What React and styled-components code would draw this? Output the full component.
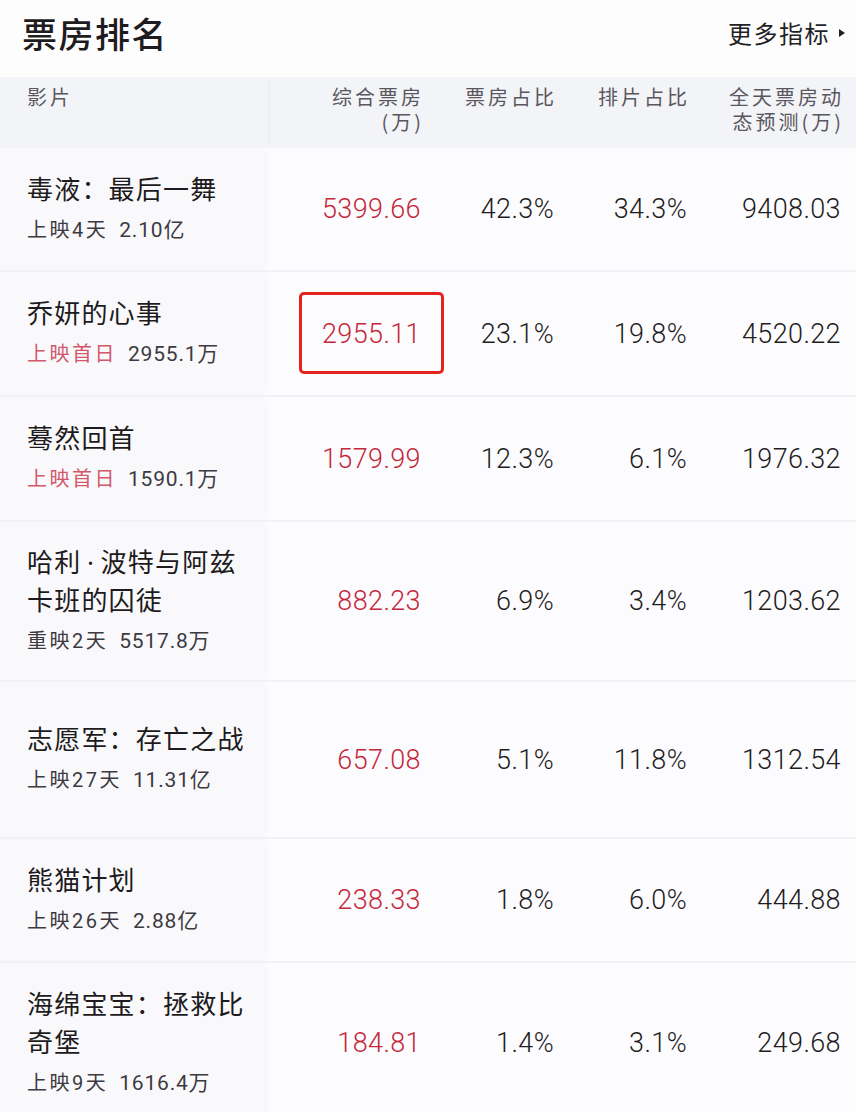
import React from "react";
import styled, { createGlobalStyle } from "styled-components";

const Global = createGlobalStyle`
  html, body { margin: 0; padding: 0; background: #fbfbfd; }
  body { font-family: "Noto Sans CJK SC", "Noto Sans", sans-serif; }
`;

const COLS = "265px 156px 133px 133px 154px";

const Page = styled.div`
  width: 856px;
  background: #fbfbfd;
  color: #1f1d22;
`;

const TitleBar = styled.div`
  height: 77px;
  display: flex;
  align-items: center;
  justify-content: space-between;
  padding: 0 10px 0 22px;
  box-sizing: border-box;
  background: #fdfdfe;
`;

const Title = styled.h1`
  margin: -12px 0 0;
  font-size: 35px;
  font-weight: 500;
  line-height: 1;
  letter-spacing: 1.5px;
  color: #1e1c21;
`;

const More = styled.div`
  display: flex;
  align-items: center;
  gap: 8px;
  font-size: 24px;
  letter-spacing: 1.5px;
  color: #221f26;
  margin-top: -12px;
`;

const HeaderRow = styled.div`
  display: grid;
  grid-template-columns: ${COLS};
  height: 71px;
  background: #f3f4f7;
`;

const HeadCell = styled.div`
  padding-top: 7px;
  font-size: 20px;
  line-height: 25px;
  letter-spacing: 3px;
  color: #5a5760;
  text-align: ${(p) => (p.$left ? "left" : "right")};
  padding-left: ${(p) => (p.$left ? "27px" : "0")};
  margin-right: -3px;
  ${(p) => p.$left && "box-shadow: 4px 0 6px -4px rgba(0,0,0,0.05);"}
`;

const HeadLine = styled.span`
  display: block;
  height: 25px;
`;

const Row = styled.div`
  display: grid;
  grid-template-columns: ${COLS};
  height: ${(p) => p.$h}px;
  border-bottom: 2px solid #f1f2f5;
  box-sizing: border-box;
  background: #fcfcfe;
`;

const FilmCell = styled.div`
  display: flex;
  flex-direction: column;
  justify-content: center;
  padding-left: 27px;
  background: #f9f9fb;
  box-shadow: 4px 0 6px -4px rgba(0, 0, 0, 0.05);
`;

const FilmName = styled.div`
  font-family: "Noto Sans", "Noto Sans CJK SC", sans-serif;
  font-size: 26px;
  line-height: 38px;
  letter-spacing: 1.2px;
  color: #1d1b20;
  width: 236px;
`;

const NameLine = styled.span`
  display: block;
`;

const Sub = styled.div`
  margin-top: 3px;
  font-size: 20px;
  line-height: 38px;
  color: #3d3a42;
  display: flex;
  align-items: baseline;
  gap: 11px;
`;

const SubLabel = styled.span`
  letter-spacing: 2.5px;
  color: ${(p) => (p.$hot ? "#d2586a" : "#3d3a42")};
  font-family: "Roboto", "Noto Sans CJK SC", sans-serif;
`;

const SubValue = styled.span`
  font-family: "Roboto", "Noto Sans CJK SC", sans-serif;
  font-size: 21px;
  letter-spacing: 0.8px;
`;

const NumCell = styled.div`
  display: flex;
  align-items: center;
  justify-content: flex-end;
  font-family: "Roboto", "Noto Sans", sans-serif;
  font-size: 27px;
  font-weight: 300;
  letter-spacing: 0.4px;
  color: ${(p) => (p.$red ? "#c5283b" : "#1f1d22")};
`;

const Boxed = styled.span`
  position: relative;
  &::after {
    content: "";
    position: absolute;
    left: -23px;
    right: -23px;
    top: -26px;
    bottom: -24px;
    border: 3.5px solid #e4231f;
    border-radius: 5px;
  }
`;

const rows = [
  { name: ["毒液：最后一舞"], label: "上映4天", value: "2.10亿", bo: "5399.66", share: "42.3%", sched: "34.3%", fc: "9408.03", h: 124 },
  { name: ["乔妍的心事"], label: "上映首日", hot: true, value: "2955.1万", bo: "2955.11", share: "23.1%", sched: "19.8%", fc: "4520.22", h: 125, boxed: true },
  { name: ["蓦然回首"], label: "上映首日", hot: true, value: "1590.1万", bo: "1579.99", share: "12.3%", sched: "6.1%", fc: "1976.32", h: 125 },
  { name: ["哈利\u2009·\u2009波特与阿兹", "卡班的囚徒"], label: "重映2天", value: "5517.8万", bo: "882.23", share: "6.9%", sched: "3.4%", fc: "1203.62", h: 160 },
  { name: ["志愿军：存亡之战"], label: "上映27天", value: "11.31亿", bo: "657.08", share: "5.1%", sched: "11.8%", fc: "1312.54", h: 157 },
  { name: ["熊猫计划"], label: "上映26天", value: "2.88亿", bo: "238.33", share: "1.8%", sched: "6.0%", fc: "444.88", h: 124 },
  { name: ["海绵宝宝：拯救比", "奇堡"], label: "上映9天", value: "1616.4万", bo: "184.81", share: "1.4%", sched: "3.1%", fc: "249.68", h: 162 },
];

const Caret = () => (
  <svg width="8" height="10" viewBox="0 0 8 10">
    <path d="M1 1 L7 5 L1 9 Z" fill="#221f26" />
  </svg>
);

export default function App() {
  return (
    <Page>
      <Global />
      <TitleBar>
        <Title>票房排名</Title>
        <More>
          更多指标
          <Caret />
        </More>
      </TitleBar>
      <HeaderRow>
        <HeadCell $left>影片</HeadCell>
        <HeadCell>
          <HeadLine>综合票房</HeadLine>
          <HeadLine>(万)</HeadLine>
        </HeadCell>
        <HeadCell>票房占比</HeadCell>
        <HeadCell>排片占比</HeadCell>
        <HeadCell>
          <HeadLine>全天票房动</HeadLine>
          <HeadLine>态预测(万)</HeadLine>
        </HeadCell>
      </HeaderRow>
      {rows.map((r) => (
        <Row key={r.name.join("")} $h={r.h}>
          <FilmCell>
            <FilmName>
              {r.name.map((l) => (
                <NameLine key={l}>{l}</NameLine>
              ))}
            </FilmName>
            <Sub>
              <SubLabel $hot={r.hot}>{r.label}</SubLabel>
              <SubValue>{r.value}</SubValue>
            </Sub>
          </FilmCell>
          <NumCell $red>{r.boxed ? <Boxed>{r.bo}</Boxed> : r.bo}</NumCell>
          <NumCell>{r.share}</NumCell>
          <NumCell>{r.sched}</NumCell>
          <NumCell>{r.fc}</NumCell>
        </Row>
      ))}
    </Page>
  );
}
